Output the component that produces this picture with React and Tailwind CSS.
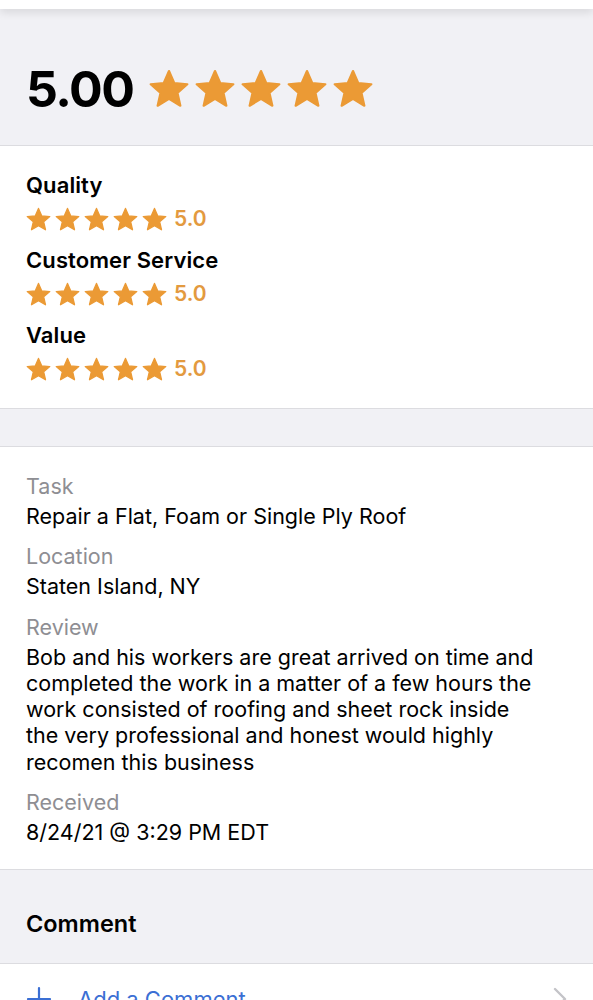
import React from "react";

const Star = ({ size, className = "" }) => (
  <svg width={size} height={size} viewBox="0 0 24 24" className={className}>
    <path
      d="M12 2.2l2.9 6.6 7.1.6-5.4 4.7 1.6 7-6.2-3.7-6.2 3.7 1.6-7L2 9.4l7.1-.6z"
      fill="#EB9A35"
      stroke="#EB9A35"
      strokeWidth="1.2"
      strokeLinejoin="round"
    />
  </svg>
);

const SmallStars = () => (
  <div className="flex items-center h-[30px] mt-[4px]">
    <div className="flex items-center gap-[2px] -ml-[1px]">
      {[0, 1, 2, 3, 4].map((i) => (
        <Star key={i} size={27} />
      ))}
    </div>
    <span className="ml-[6px] text-[21px] font-semibold text-[#E39A3F] leading-[30px]">5.0</span>
  </div>
);

const Rating = ({ label, first }) => (
  <div className={first ? "" : "mt-[11px]"}>
    <div className="text-[22px] font-semibold text-black leading-[30px] tracking-[0.1px]">{label}</div>
    <SmallStars />
  </div>
);

const Field = ({ label, children, first }) => (
  <div className={first ? "" : "mt-[14px]"}>
    <div className="text-[21.5px] text-[#8e8e93] leading-[26px]">{label}</div>
    <div className="mt-[4px] max-w-[515px] text-[21.5px] text-black leading-[26.3px]">{children}</div>
  </div>
);

export default function App() {
  return (
    <div
      className="w-[593px] h-[1000px] overflow-hidden bg-white"
      style={{ fontFamily: "Inter, 'Noto Sans', sans-serif" }}
    >
      <div className="h-[9px] bg-white relative z-10 shadow-[0_3px_10px_rgba(0,0,0,0.12)]" />
      <div className="h-[137px] bg-[#f1f1f5] border-b border-[#dcdce0] flex items-center px-[26px] pt-[24px]">
        <span className="text-[50px] font-bold text-black tracking-[-1.5px] leading-none">5.00</span>
        <div className="flex items-center gap-[2px] ml-[14px]">
          {[0, 1, 2, 3, 4].map((i) => (
            <Star key={i} size={44} />
          ))}
        </div>
      </div>

      <div className="bg-white px-[26px] pt-[24px] pb-[24px] border-b border-[#dcdce0]">
        <Rating label="Quality" first />
        <Rating label="Customer Service" />
        <Rating label="Value" />
      </div>

      <div className="h-[38px] bg-[#f1f1f5] border-b border-[#dcdce0]" />

      <div className="bg-white px-[26px] pt-[26px] pb-[24px] border-b border-[#dcdce0]">
        <Field label="Task" first>Repair a Flat, Foam or Single Ply Roof</Field>
        <Field label="Location">Staten Island, NY</Field>
        <Field label="Review">
          Bob and his workers are great arrived on time and completed the work in a matter of a few hours the
          work consisted of roofing and sheet rock inside the very professional and honest would highly recomen
          this business
        </Field>
        <Field label="Received">8/24/21 @ 3:29 PM EDT</Field>
      </div>

      <div className="h-[94px] bg-[#f1f1f5] border-b border-[#dcdce0] flex items-end px-[26px] pb-[24px]">
        <span className="text-[23.5px] font-semibold text-black leading-[30px]">Comment</span>
      </div>

      <div className="h-[70px] bg-white flex items-center px-[26px]">
        <svg width="26" height="26" viewBox="0 0 26 26" className="shrink-0">
          <path d="M13 2v22M2 13h22" stroke="#3b6fd4" strokeWidth="2.2" strokeLinecap="round" />
        </svg>
        <span className="ml-[26px] text-[22px] text-[#3b6fd4] leading-[30px]">Add a Comment</span>
        <svg width="14" height="24" viewBox="0 0 14 24" className="ml-auto">
          <path d="M2 2l10 10L2 22" fill="none" stroke="#c4c4c8" strokeWidth="2.4" strokeLinecap="round" strokeLinejoin="round" />
        </svg>
      </div>
    </div>
  );
}
